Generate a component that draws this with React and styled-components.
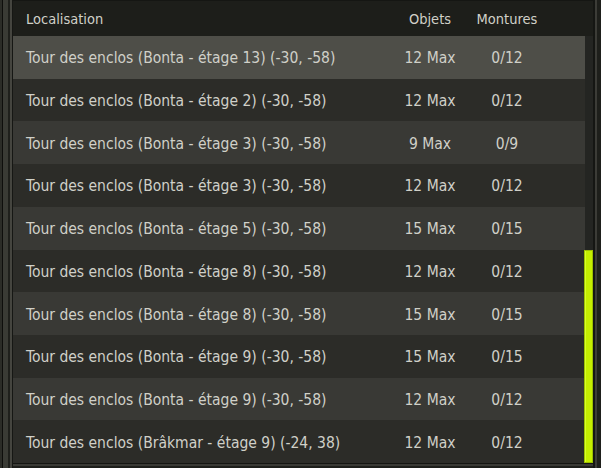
import React from 'react';
import styled, { createGlobalStyle } from 'styled-components';

const GlobalStyle = createGlobalStyle`
  html, body {
    margin: 0;
    padding: 0;
    background: #1c1d19;
  }
  * {
    box-sizing: border-box;
  }
`;

const pens = [
  { place: 'Tour des enclos (Bonta - étage 13) (-30, -58)', objects: '12 Max', mounts: '0/12' },
  { place: 'Tour des enclos (Bonta - étage 2) (-30, -58)', objects: '12 Max', mounts: '0/12' },
  { place: 'Tour des enclos (Bonta - étage 3) (-30, -58)', objects: '9 Max', mounts: '0/9' },
  { place: 'Tour des enclos (Bonta - étage 3) (-30, -58)', objects: '12 Max', mounts: '0/12' },
  { place: 'Tour des enclos (Bonta - étage 5) (-30, -58)', objects: '15 Max', mounts: '0/15' },
  { place: 'Tour des enclos (Bonta - étage 8) (-30, -58)', objects: '12 Max', mounts: '0/12' },
  { place: 'Tour des enclos (Bonta - étage 8) (-30, -58)', objects: '15 Max', mounts: '0/15' },
  { place: 'Tour des enclos (Bonta - étage 9) (-30, -58)', objects: '15 Max', mounts: '0/15' },
  { place: 'Tour des enclos (Bonta - étage 9) (-30, -58)', objects: '12 Max', mounts: '0/12' },
  { place: 'Tour des enclos (Brâkmar - étage 9) (-24, 38)', objects: '12 Max', mounts: '0/12' },
];

const Frame = styled.div`
  width: 601px;
  height: 468px;
  padding: 0 8px 5px 13px;
  display: flex;
  flex-direction: column;
  font-family: 'DejaVu Sans Condensed', 'DejaVu Sans', sans-serif;
  color: #d0d0c8;
  background:
    linear-gradient(to right, #2b2c27 0 2px, #0e0e0c 2px 3px, #3a3b35 3px 8px, #1f201c 8px 10px, #45453f 10px 12px, #161714 12px 13px) left top / 13px 100% no-repeat,
    linear-gradient(to right, #151613 0 2px, #3c3c37 2px 4px, #1e1f1b 4px 8px) right top / 8px 100% no-repeat,
    linear-gradient(to bottom, #141512 0 1px, #3a3a35 1px 3px, #1e1f1b 3px 5px) left bottom / 100% 5px no-repeat,
    #1c1d19;
`;

const Header = styled.div`
  height: 36px;
  display: grid;
  grid-template-columns: 1fr 74px 80px;
  align-items: center;
  padding: 0 46px 0 13px;
  font-size: 14.5px;
  background: #1d1e1a;
  border-top: 1px solid #151613;
`;

const HeadCell = styled.div`
  text-align: ${p => (p.$center ? 'center' : 'left')};
  white-space: nowrap;
`;

const Body = styled.div`
  flex: 1;
  display: flex;
  min-height: 0;
`;

const List = styled.div`
  flex: 1;
  display: flex;
  flex-direction: column;
`;

const Row = styled.div`
  flex: 1;
  display: grid;
  grid-template-columns: 1fr 74px 80px;
  align-items: center;
  padding: 2px 38px 0 13px;
  font-size: 15.5px;
  background: ${p => (p.$selected ? '#4e4e48' : p.$odd ? '#2c2c28' : '#393935')};
`;

const Cell = styled.div`
  text-align: ${p => (p.$center ? 'center' : 'left')};
  white-space: nowrap;
`;

const Track = styled.div`
  width: 8px;
  display: flex;
  flex-direction: column;
  justify-content: flex-end;
  background: rgba(255, 255, 255, 0.04);
`;

const Thumb = styled.div`
  height: ${p => p.$size}px;
  margin-left: -1px;
  width: 9px;
  background: #c5ee00;
  border: 1px solid #9dbf00;
  box-shadow: inset 1px 0 0 #d6ff2a;
`;

export default function App() {
  return (
    <>
      <GlobalStyle />
      <Frame>
        <Header>
          <HeadCell>Localisation</HeadCell>
          <HeadCell $center>Objets</HeadCell>
          <HeadCell $center>Montures</HeadCell>
        </Header>
        <Body>
          <List>
            {pens.map((pen, i) => (
              <Row key={i} $selected={i === 0} $odd={i % 2 === 1}>
                <Cell>{pen.place}</Cell>
                <Cell $center>{pen.objects}</Cell>
                <Cell $center>{pen.mounts}</Cell>
              </Row>
            ))}
          </List>
          <Track>
            <Thumb $size={213} />
          </Track>
        </Body>
      </Frame>
    </>
  );
}
